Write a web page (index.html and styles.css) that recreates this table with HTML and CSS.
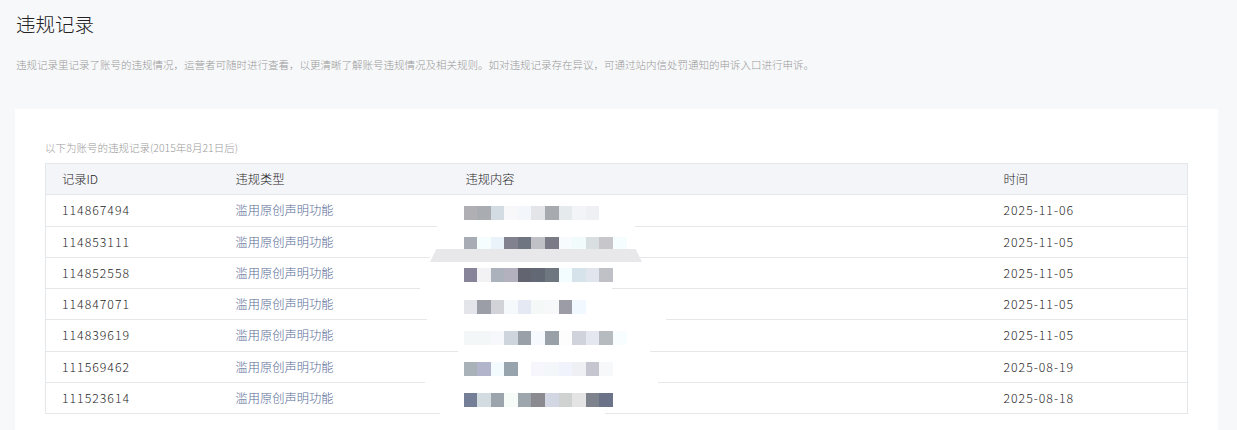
FILE: index.html
```html
<!DOCTYPE html>
<html lang="zh-CN">
  <head>
    <meta charset="UTF-8" />
    <meta name="viewport" content="width=device-width, initial-scale=1.0" />
    <title>违规记录</title>
    <link rel="stylesheet" href="styles.css">
  </head>
  <body>
    <div class="page">
      <h2 class="title">违规记录</h2>
      <p class="desc">违规记录里记录了账号的违规情况，运营者可随时进行查看，以更清晰了解账号违规情况及相关规则。如对违规记录存在异议，可通过站内信处罚通知的申诉入口进行申诉。</p>

      <section class="card">
        <p class="sub">以下为账号的违规记录(2015年8月21日后)</p>
        <div class="table-wrap">
          <table class="records">
            <thead>
              <tr>
                <th class="c-id">记录ID</th>
                <th class="c-type">违规类型</th>
                <th class="c-content">违规内容</th>
                <th class="c-time">时间</th>
              </tr>
            </thead>
            <tbody>
              <tr>
                <td class="num">114867494</td>
                <td class="type">滥用原创声明功能</td>
                <td><span class="mosaic"><i style="background:#b0afb3"></i><i style="background:#a9acb0"></i><i style="background:#d3dbe3"></i><i style="background:#f8f8fb"></i><i style="background:#f3f6fa"></i><i style="background:#e3e5e8"></i><i style="background:#a7aaae"></i><i style="background:#e5eaed"></i><i style="background:#f2f4f7"></i><i style="background:#eef0f3"></i></span></td>
                <td class="num">2025-11-06</td>
              </tr>
              <tr>
                <td class="num">114853111</td>
                <td class="type">滥用原创声明功能</td>
                <td><span class="mosaic"><i style="background:#a8adb5"></i><i style="background:#f5fdff"></i><i style="background:#ebf3fa"></i><i style="background:#82818f"></i><i style="background:#6f7581"></i><i style="background:#bfc1c7"></i><i style="background:#7b7b88"></i><i style="background:#f8fbfd"></i><i style="background:#f2fbfc"></i><i style="background:#d9dfe0"></i><i style="background:#c6c6cb"></i><i style="background:#f6fdff"></i></span></td>
                <td class="num">2025-11-05</td>
              </tr>
              <tr>
                <td class="num">114852558</td>
                <td class="type">滥用原创声明功能</td>
                <td><span class="mosaic"><i style="background:#878399"></i><i style="background:#f2f2f5"></i><i style="background:#abb2bc"></i><i style="background:#b2b1bd"></i><i style="background:#626570"></i><i style="background:#626974"></i><i style="background:#6e7780"></i><i style="background:#f3fdff"></i><i style="background:#d6e3ea"></i><i style="background:#e0e5ee"></i><i style="background:#bfc1c7"></i></span></td>
                <td class="num">2025-11-05</td>
              </tr>
              <tr>
                <td class="num">114847071</td>
                <td class="type">滥用原创声明功能</td>
                <td><span class="mosaic"><i style="background:#e3e5ea"></i><i style="background:#9b9ea7"></i><i style="background:#d1d3d8"></i><i style="background:#f5f9fc"></i><i style="background:#e5e9f3"></i><i style="background:#f4f8f7"></i><i style="background:#f7f8fa"></i><i style="background:#9c9ca6"></i><i style="background:#f2f8ff"></i></span></td>
                <td class="num">2025-11-05</td>
              </tr>
              <tr>
                <td class="num">114839619</td>
                <td class="type">滥用原创声明功能</td>
                <td><span class="mosaic"><i style="background:#f3f7f8"></i><i style="background:#f3f7f8"></i><i style="background:#f6f8fb"></i><i style="background:#cfd5dd"></i><i style="background:#99a0a8"></i><i style="background:#f6faff"></i><i style="background:#99a0a8"></i><i style="background:#fdfdfd"></i><i style="background:#d0d3dc"></i><i style="background:#e4e7ef"></i><i style="background:#b6bbc0"></i><i style="background:#f8feff"></i></span></td>
                <td class="num">2025-11-05</td>
              </tr>
              <tr>
                <td class="num">111569462</td>
                <td class="type">滥用原创声明功能</td>
                <td><span class="mosaic"><i style="background:#a9b1b9"></i><i style="background:#b1b4cb"></i><i style="background:#f3fbff"></i><i style="background:#97a4ad"></i><i style="background:#ffffff"></i><i style="background:#f8f6fd"></i><i style="background:#f4f7f9"></i><i style="background:#f0f3fc"></i><i style="background:#eff0f4"></i><i style="background:#c5c6cf"></i><i style="background:#f7f8fa"></i></span></td>
                <td class="num">2025-08-19</td>
              </tr>
              <tr>
                <td class="num">111523614</td>
                <td class="type">滥用原创声明功能</td>
                <td><span class="mosaic"><i style="background:#747f97"></i><i style="background:#d3dde1"></i><i style="background:#9ba3ad"></i><i style="background:#f6fbf8"></i><i style="background:#9ea6ad"></i><i style="background:#8c8a91"></i><i style="background:#d2d7e3"></i><i style="background:#d0d2d2"></i><i style="background:#e4e4e4"></i><i style="background:#7d828c"></i><i style="background:#6b7389"></i></span></td>
                <td class="num">2025-08-18</td>
              </tr>
            </tbody>
          </table>
          <!-- 截图里的涂抹痕迹 -->
          <span class="smear s1"></span>
          <span class="smear s2"></span>
          <span class="smear s3"></span>
          <span class="smear s4"></span>
          <span class="smear s5"></span>
          <span class="smear s6"></span>
          <span class="smear s7"></span>
          <span class="band"></span>
        </div>
      </section>
    </div>
  </body>
</html>
```

FILE: styles.css
```css
* {
  margin: 0;
  padding: 0;
  box-sizing: border-box;
}
body {
  background: #f7f8fa;
  font-family: "Noto Sans CJK SC", "Noto Sans", "Liberation Sans", sans-serif;
  font-weight: 300;
  color: #333;
}
.page {
  padding: 10px 19px 0 15px;
}
.title {
  font-size: 19.5px;
  font-weight: 300;
  line-height: 28px;
  padding-left: 1px;
  color: #222;
}
.desc {
  margin-top: 19px;
  font-size: 10.5px;
  line-height: 16px;
  padding-left: 1px;
  color: #999;
}
.card {
  margin-top: 36px;
  background: #fff;
  width: 1203px;
  height: 340px;
  padding: 30px 30px 0;
}
.sub {
  font-size: 10.5px;
  line-height: 17px;
  margin-bottom: 7px;
  color: #999;
}
.table-wrap {
  position: relative;
}
.records {
  width: 1143px;
  border-collapse: collapse;
  table-layout: fixed;
  font-size: 12.25px;
  border: 1px solid #e4e8eb;
}
.records th,
.records td {
  height: 31.25px;
  padding: 0 16px;
  text-align: left;
  font-weight: 300;
  border-top: 1px solid #e4e8eb;
  vertical-align: middle;
  color: #262626;
}
.records th {
  background: #f4f5f9;
}
.records td.num {
  letter-spacing: 1px;
}
.c-id {
  width: 174px;
}
.c-type {
  width: 230px;
}
.c-content {
  width: 538px;
}
.records td.type {
  color: #576b95;
}
.mosaic {
  display: flex;
  margin-left: -2px;
  margin-top: 5px;
}
.mosaic i {
  display: block;
  width: 13.6px;
  height: 14px;
}
.smear {
  position: absolute;
  height: 3px;
  background: #fff;
}
.s1 { top: 61px; left: 392px; width: 198px; }
.s2 { top: 92px; left: 385px; width: 210px; }
.s3 { top: 124px; left: 375px; width: 192px; }
.s4 { top: 155px; left: 382px; width: 239px; }
.s5 { top: 186px; left: 413px; width: 192px; }
.s6 { top: 217px; left: 380px; width: 233px; }
.s7 { top: 249px; left: 395px; width: 165px; }
.band {
  position: absolute;
  top: 86px;
  left: 385px;
  width: 212px;
  height: 13px;
  background: #e8e8ea;
  clip-path: polygon(3% 0, 97% 0, 100% 100%, 0 100%);
}
```
